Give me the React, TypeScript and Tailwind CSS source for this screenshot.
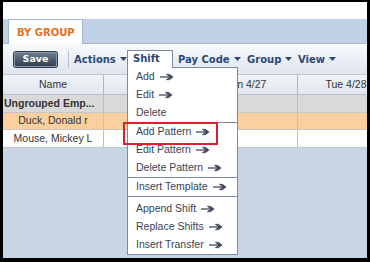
import React from "react";

const NAVY = "#2b4878";

function Caret() {
  return (
    <svg width="7" height="4" viewBox="0 0 7 4" className="ml-[4px] shrink-0">
      <path d="M0 0H7L3.5 4Z" fill={NAVY} />
    </svg>
  );
}

function Arrow() {
  return (
    <svg width="14" height="8" viewBox="0 0 14 8" className="ml-[5px] shrink-0">
      <path d="M0 4H12" stroke="currentColor" strokeWidth="1.2" fill="none" />
      <path d="M6.5 1L10.5 4L6.5 7" stroke="currentColor" strokeWidth="1.2" fill="none" />
      <path d="M8.5 1L12.5 4L8.5 7" stroke="currentColor" strokeWidth="1.2" fill="none" />
    </svg>
  );
}

type Item = { label: string; arrow: boolean };

const sections: Item[][] = [
  [
    { label: "Add", arrow: true },
    { label: "Edit", arrow: true },
    { label: "Delete", arrow: false },
  ],
  [
    { label: "Add Pattern", arrow: true },
    { label: "Edit Pattern", arrow: true },
    { label: "Delete Pattern", arrow: true },
  ],
  [{ label: "Insert Template", arrow: true }],
  [
    { label: "Append Shift", arrow: true },
    { label: "Replace Shifts", arrow: true },
    { label: "Insert Transfer", arrow: true },
  ],
];

function ShiftMenu() {
  return (
    <div className="relative self-start mt-[6px] w-[46px] shrink-0">
      <div className="relative z-20 h-[18px] bg-white border-l border-t border-r border-[#7d8ca3] pl-[5px] pt-[1px] text-[10px] font-bold leading-[14px] text-[#2b4878]">
        Shift
      </div>
      <div className="absolute left-0 top-[17px] z-10 w-[111px] bg-white border border-[#7d8ca3] font-['Liberation_Sans',Arial,sans-serif] text-[10.5px] text-[#383f52]">
        {sections.map((sec, i) => (
          <div
            key={i}
            className={`${i > 0 ? "border-t border-[#7d8ca3]" : ""} ${i === 3 ? "pt-[3px]" : ""}`}
          >
            {sec.map((it) => (
              <div key={it.label} className="flex h-[18px] items-center pl-[8px]">
                <span>{it.label}</span>
                {it.arrow && <Arrow />}
              </div>
            ))}
          </div>
        ))}
        <div className="absolute left-[-5px] top-[54px] h-[23px] w-[95px] border-2 border-[#d4232b]" />
      </div>
    </div>
  );
}

function ToolLabel({ label, width }: { label: string; width: string }) {
  return (
    <div className={`flex items-center shrink-0 ${width}`}>
      <span className="text-[10px] font-bold text-[#2b4878]">{label}</span>
      <Caret />
    </div>
  );
}

const rows = [
  { name: "Ungrouped Emp...", bg: "bg-[#d9d9d9]", bold: true, h: "h-[18px]" },
  { name: "Duck, Donald r", bg: "bg-[#fccf9f]", bold: false, h: "h-[17px]" },
  { name: "Mouse, Mickey L", bg: "bg-white", bold: false, h: "h-[18px]" },
];

export default function App() {
  return (
    <div className="w-[370px] h-[262px] bg-black pt-[2px] pl-[3px] pr-[3px] pb-[4px]">
      <div className="relative flex h-full flex-col overflow-hidden bg-[#c8d5e6] font-['Liberation_Sans',Arial,sans-serif]">
        <div className="h-[17px] shrink-0 bg-white overflow-hidden flex justify-end pr-[8px]">
          <span className="mt-[-10px] text-[11px] leading-[13px] text-[#666]">Timecard</span>
        </div>

        <div className="flex h-[25px] shrink-0 items-end border-b border-[#a7b8ce] bg-[#c0d1e5] pl-[5px]">
          <div className="relative -mb-px flex h-[25px] w-[75px] items-center border-l border-t border-r border-[#a7b8ce] bg-white pl-[8px] font-['DejaVu_Sans',Verdana,sans-serif] text-[10px] font-bold text-[#e2701f]">
            BY GROUP
          </div>
        </div>

        <div className="flex h-[31px] shrink-0 items-center border-b border-[#c0cad7] bg-gradient-to-b from-[#f8fafc] to-[#dfe5ee] font-['DejaVu_Sans',Verdana,sans-serif]">
          <div className="ml-[11px] flex h-[15px] w-[43px] shrink-0 items-center justify-center rounded-[2px] border border-[#8a97a8] bg-gradient-to-b from-[#6b7a8f] to-[#33414f] text-[9.5px] font-bold text-white shadow-[0_0_0_1px_#2c394b]">
            Save
          </div>
          <div className="ml-[11px] h-[17px] w-px shrink-0 bg-[#b4bfcd]" />
          <div className="ml-[5px] flex shrink-0">
            <ToolLabel label="Actions" width="w-[53px]" />
          </div>
          <ShiftMenu />
          <div className="ml-[5px] flex shrink-0">
            <ToolLabel label="Pay Code" width="w-[69px]" />
            <ToolLabel label="Group" width="w-[51px]" />
            <ToolLabel label="View" width="w-[40px]" />
          </div>
        </div>

        <div className="flex h-[20px] shrink-0 border-b border-[#b3bfce] bg-gradient-to-b from-[#f1f4f8] to-[#e1e7ef] text-[10.5px] text-[#333]">
          <div className="flex w-[101px] shrink-0 items-center justify-center border-r border-[#a9b6c7]">Name</div>
          <div className="w-[88px] shrink-0 border-r border-[#a9b6c7]" />
          <div className="flex w-[106px] shrink-0 items-center justify-center border-r border-[#a9b6c7]">Mon 4/27</div>
          <div className="flex w-[96px] shrink-0 items-center justify-center">Tue 4/28</div>
        </div>

        {rows.map((r) => (
          <div key={r.name} className={`flex shrink-0 border-b border-[#c6c6c6] ${r.h} ${r.bg} text-[#333]`}>
            <div
              className={`flex w-[101px] shrink-0 items-center border-r border-[#c0c0c0] ${
                r.bold ? "pl-[1px] text-[10.5px] font-bold" : "justify-center text-[10.5px]"
              }`}
            >
              {r.name}
            </div>
            <div className="w-[88px] shrink-0 border-r border-[#c0c0c0]" />
            <div className="w-[106px] shrink-0 border-r border-[#c0c0c0]" />
            <div className="w-[96px] shrink-0" />
          </div>
        ))}
      </div>
    </div>
  );
}
